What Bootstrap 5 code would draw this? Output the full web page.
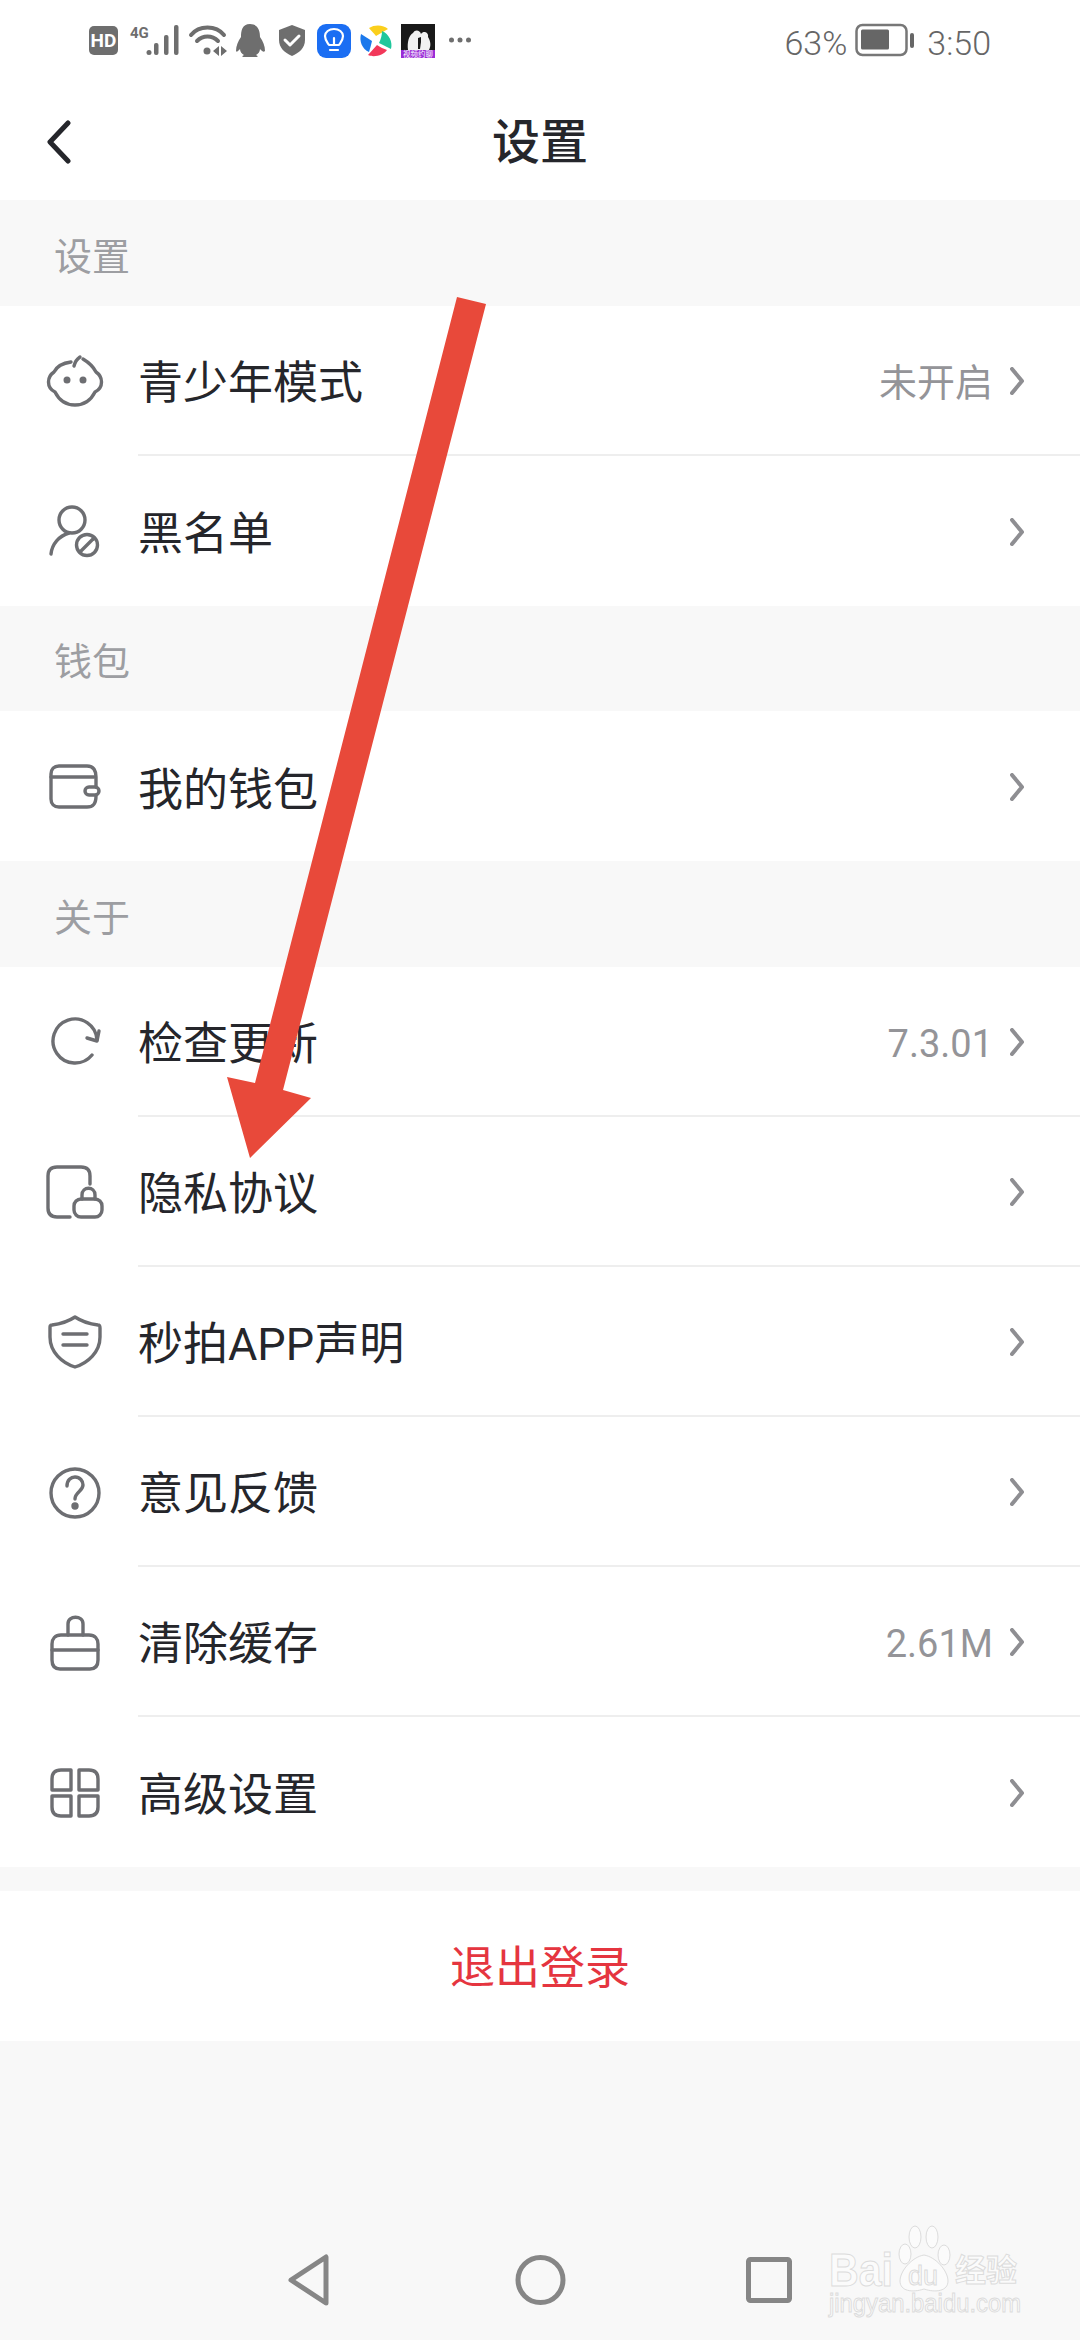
<!doctype html>
<html lang="zh">
<head>
<meta charset="UTF-8" />
<meta name="viewport" content="width=device-width, initial-scale=1" />
<title>设置</title>
<link href="https://cdn.jsdelivr.net/npm/bootstrap@5.3.0/dist/css/bootstrap.min.css" rel="stylesheet" />
<style>
  body { width: 1080px; height: 2340px; overflow: hidden; background: #f8f8f8; font-family: Roboto, "Noto Sans CJK SC", sans-serif; color: #25262b; }
  .page-wrap { height: 2340px; }
  .status-bar { height: 80px; color: #666; font-size: 34px; padding-left: 80px; padding-right: 89px; }
  .status-time { font-weight: 300; padding-top: 6px; }
  .top-bar { height: 120px; font-size: 48px; font-weight: 500; }
  .top-bar span { padding-top: 6px; }
  .top-bar svg { left: 44px; top: 40px; }
  .sect-label { height: 105.5px; padding-left: 54px; padding-top: 9px; font-size: 38px; color: #9d9ea2; }
  .set-list { border-radius: 0; --bs-list-group-bg: #fff; }
  .set-row { height: 150px; padding: 0; border: 0; font-size: 45px; color: #25262b; }
  .row-ico { width: 60px; height: 60px; margin-left: 45px; margin-right: 33px; flex: none; fill: none; stroke: #6d6e72; stroke-width: 3.4; stroke-linecap: round; stroke-linejoin: round; }
  .row-body { height: 100%; padding-right: 56px; border-bottom: 2px solid #eeeeee; }
  .set-row:last-child .row-body { border-bottom: 0; }
  .row-name { padding-top: 9px; }
  .row-val { font-size: 38px; color: #949498; margin-right: 17px; padding-top: 8px; }
  .row-chev { width: 14px; height: 28px; margin-top: 2px; fill: none; stroke: #8e8e92; stroke-width: 4; stroke-linecap: round; stroke-linejoin: round; }
  .logout-row { height: 150px; margin-top: 24px; padding-top: 6px; font-size: 45px; color: #e5353f; }
  .soft-keys { left: 0; top: 2240px; width: 1080px; height: 80px; fill: none; stroke: #868686; stroke-width: 5; stroke-linejoin: round; }
  .red-arrow { left: 0; top: 0; width: 1080px; height: 2340px; pointer-events: none; }
  .baidu-mark { left: 820px; top: 2215px; width: 240px; height: 110px; }
  .baidu-mark text { fill: #fbfbfb; stroke: #dcdcdc; stroke-width: 1; }
</style>
</head>
<body>
<div class="page-wrap position-relative">

  <div class="status-bar bg-white d-flex align-items-center justify-content-between">
    <svg width="400" height="80" viewBox="80 0 400 80">
      <rect x="89" y="26" width="29" height="29" rx="5" fill="#6e6e6e"/>
      <text x="103.500" y="47" text-anchor="middle" font-family="Roboto" font-weight="700" font-size="19" fill="#fff">HD</text>
      <text x="130" y="38" font-family="Roboto" font-weight="700" font-size="15" fill="#6e6e6e">4G</text>
      <circle cx="149" cy="52.500" r="2.500" fill="#6e6e6e"/>
      <rect x="154" y="43" width="4.500" height="12" rx="2" fill="#6e6e6e"/>
      <rect x="164" y="35" width="4.500" height="20" rx="2" fill="#6e6e6e"/>
      <rect x="174" y="25" width="4.500" height="30" rx="2" fill="#6e6e6e"/>
      <g fill="none" stroke="#6e6e6e" stroke-width="4" stroke-linecap="round">
        <path d="M191 35 C199 25 216 25 224 35"/>
        <path d="M197 41 C203 35 212 35 218 41"/>
      </g>
      <circle cx="207" cy="51" r="3.500" fill="#6e6e6e"/>
      <path d="M219 46 V56 L213 51 Z M221 46 V56 L227 51 Z" fill="#6e6e6e"/>
      <path d="M250 24 C258 24 260 31 260 37 C263 41 265 46 265 51 C263 53 261 50 260 49 C260 52 258 54 256 55 C258 56 258 57 257 57 H243 C242 57 242 56 244 55 C242 54 240 52 240 49 C239 50 237 53 236 51 C236 46 238 41 241 37 C241 31 242 24 250 24 Z" fill="#6e6e6e"/>
      <path d="M292 25 L305 30 V40 C305 48 299 53 292 56 C285 53 279 48 279 40 V30 Z" fill="#6e6e6e"/>
      <path d="M285 40 L290 45 L299 36" fill="none" stroke="#fff" stroke-width="3" stroke-linecap="round" stroke-linejoin="round"/>
      <rect x="317" y="24" width="34" height="34" rx="9" fill="#1b6ef3"/>
      <g fill="none" stroke="#fff" stroke-width="2.200" stroke-linecap="round" stroke-linejoin="round">
        <path d="M329 45 C327 42 325 40 325 36 C325 32 329 29 334 29 C339 29 343 32 343 36 C343 40 341 42 339 45 Z"/>
        <path d="M330 50 H338 M334 45 V38"/>
      </g>
      <path d="M369 28 C375 24 384 25 388 29 L376 36 C374 33 371 31 369 28 Z" fill="#fbcf1c"/>
      <path d="M382 31 C389 34 393 42 391 49 L379 43 C381 39 382 35 382 31 Z" fill="#1fc79c"/>
      <path d="M387 50 C384 55 374 58 368 55 L377 45 C380 47 384 49 387 50 Z" fill="#f2385a"/>
      <path d="M369 52 C362 49 359 41 361 34 L372 41 C371 45 370 49 369 52 Z" fill="#1a78ec"/>
      <rect x="401" y="24" width="34" height="34" fill="#191919"/>
      <path d="M408 50 C407 42 409 35 413 33 C415 29 420 30 421 34 C424 30 429 33 428 37 C431 42 431 46 429 50 Z" fill="#f2f2f2"/>
      <path d="M418 38 L421 37 L421 42 L420 49 H418 Z" fill="#191919"/>
      <rect x="401" y="50" width="34" height="8" fill="#9a2bd6"/>
      <text x="418" y="57" text-anchor="middle" font-family="Noto Sans CJK SC" font-size="7.500" fill="#fff">视频约聊</text>
      <circle cx="451.500" cy="40" r="2.500" fill="#6e6e6e"/><circle cx="460" cy="40" r="2.500" fill="#6e6e6e"/><circle cx="468.500" cy="40" r="2.500" fill="#6e6e6e"/>
    </svg>
    <div class="d-flex align-items-center">
      <span class="status-time">63%</span>
      <svg width="64" height="34" viewBox="0 0 64 34" class="ms-2 me-2">
        <rect x="1.500" y="2" width="50" height="30" rx="6" fill="none" stroke="#777" stroke-width="2.500"/>
        <rect x="6" y="6.500" width="28" height="20" rx="1.500" fill="#666"/>
        <rect x="55" y="10" width="4" height="15" rx="2" fill="#666"/>
      </svg>
      <span class="status-time">3:50</span>
    </div>
  </div>

  <div class="top-bar bg-white position-relative d-flex align-items-center justify-content-center">
    <svg class="position-absolute" width="30" height="44" viewBox="0 0 30 44" fill="none" stroke="#25262b" stroke-width="5" stroke-linecap="round" stroke-linejoin="round"><path d="M24 3 L6 22 L24 41"/></svg>
    <span>设置</span>
  </div>

  <div class="sect-label d-flex align-items-center">设置</div>
  <ul class="list-group list-group-flush set-list">
    <li class="list-group-item set-row d-flex align-items-center">
      <svg class="row-ico" viewBox="0 0 60 60"><path d="M26 11 C18 12 12 15 9 21 C6 23 3.500 26 3.500 31 C3.500 36 6 39 10 41 C14 49 21 54 30 54 C39 54 46 49 50 41 C54 39 56.500 36 56.500 31 C56.500 26 54 23 51 21 C48 15 43 11 38 8"/><path d="M29 15 C30 11 32 8 35 6"/><circle cx="22" cy="29" r="1.800" fill="#6d6e72"/><circle cx="38" cy="29" r="1.800" fill="#6d6e72"/></svg>
      <div class="row-body flex-grow-1 d-flex align-items-center">
        <span class="row-name flex-grow-1">青少年模式</span><span class="row-val">未开启</span>
        <svg class="row-chev" viewBox="0 0 14 28"><path d="M2 2 L12 14 L2 26"/></svg>
      </div>
    </li>
    <li class="list-group-item set-row d-flex align-items-center">
      <svg class="row-ico" viewBox="0 0 60 60"><circle cx="27" cy="19" r="13"/><path d="M6 53 C7 43 14 35 24 32"/><circle cx="42" cy="44" r="10.500"/><path d="M36 50 L48 38"/></svg>
      <div class="row-body flex-grow-1 d-flex align-items-center">
        <span class="row-name flex-grow-1">黑名单</span>
        <svg class="row-chev" viewBox="0 0 14 28"><path d="M2 2 L12 14 L2 26"/></svg>
      </div>
    </li>
  </ul>

  <div class="sect-label d-flex align-items-center">钱包</div>
  <ul class="list-group list-group-flush set-list">
    <li class="list-group-item set-row d-flex align-items-center">
      <svg class="row-ico" viewBox="0 0 60 60"><path d="M51 31 V21 C51 15 49 10 42 10 H14 C9 10 6 13 6 18 V43 C6 48 9 51 14 51 H42 C48 51 51 48 51 40"/><path d="M6 21 H49"/><rect x="40" y="31" width="14" height="8" rx="4"/></svg>
      <div class="row-body flex-grow-1 d-flex align-items-center">
        <span class="row-name flex-grow-1">我的钱包</span>
        <svg class="row-chev" viewBox="0 0 14 28"><path d="M2 2 L12 14 L2 26"/></svg>
      </div>
    </li>
  </ul>

  <div class="sect-label d-flex align-items-center">关于</div>
  <ul class="list-group list-group-flush set-list">
    <li class="list-group-item set-row d-flex align-items-center">
      <svg class="row-ico" viewBox="0 0 60 60"><path d="M47 43 A22 22 0 1 1 52 28"/><path d="M54 19 L52 29 L42 26"/></svg>
      <div class="row-body flex-grow-1 d-flex align-items-center">
        <span class="row-name flex-grow-1">检查更新</span><span class="row-val">7.3.01</span>
        <svg class="row-chev" viewBox="0 0 14 28"><path d="M2 2 L12 14 L2 26"/></svg>
      </div>
    </li>
    <li class="list-group-item set-row d-flex align-items-center">
      <svg class="row-ico" viewBox="0 0 60 60"><path d="M45 22 V14 C45 8 42 5 36 5 H12 C6 5 3 8 3 14 V46 C3 52 6 55 12 55 H25"/><rect x="29" y="37" width="28" height="18" rx="7"/><path d="M37 37 V33 C37 24 50 24 50 33 V37"/></svg>
      <div class="row-body flex-grow-1 d-flex align-items-center">
        <span class="row-name flex-grow-1">隐私协议</span>
        <svg class="row-chev" viewBox="0 0 14 28"><path d="M2 2 L12 14 L2 26"/></svg>
      </div>
    </li>
    <li class="list-group-item set-row d-flex align-items-center">
      <svg class="row-ico" viewBox="0 0 60 60"><path d="M30 5 C24 9 15 12 7 13 C5 13 5 14 5 16 V25 C5 40 17 51 30 55 C43 51 55 40 55 25 V16 C55 14 55 13 53 13 C45 12 36 9 30 5 Z"/><path d="M18 22 H42 M18 33 H42"/></svg>
      <div class="row-body flex-grow-1 d-flex align-items-center">
        <span class="row-name flex-grow-1">秒拍APP声明</span>
        <svg class="row-chev" viewBox="0 0 14 28"><path d="M2 2 L12 14 L2 26"/></svg>
      </div>
    </li>
    <li class="list-group-item set-row d-flex align-items-center">
      <svg class="row-ico" viewBox="0 0 60 60"><circle cx="30" cy="31" r="24"/><path d="M22 24 C22 18 26 15 30 15 C35 15 38 19 38 23 C38 29 30 30 30 37"/><circle cx="30" cy="44" r="2" fill="#6d6e72"/></svg>
      <div class="row-body flex-grow-1 d-flex align-items-center">
        <span class="row-name flex-grow-1">意见反馈</span>
        <svg class="row-chev" viewBox="0 0 14 28"><path d="M2 2 L12 14 L2 26"/></svg>
      </div>
    </li>
    <li class="list-group-item set-row d-flex align-items-center">
      <svg class="row-ico" viewBox="0 0 60 60"><path d="M23 23 V12 C23 3 38 3 38 12 V23"/><path d="M16 23 H44 C50 23 53 27 53 32 V48 C53 54 50 57 45 57 H15 C10 57 7 54 7 48 V32 C7 27 10 23 16 23 Z"/><path d="M7 38 H53"/></svg>
      <div class="row-body flex-grow-1 d-flex align-items-center">
        <span class="row-name flex-grow-1">清除缓存</span><span class="row-val">2.61M</span>
        <svg class="row-chev" viewBox="0 0 14 28"><path d="M2 2 L12 14 L2 26"/></svg>
      </div>
    </li>
    <li class="list-group-item set-row d-flex align-items-center">
      <svg class="row-ico" viewBox="0 0 60 60"><path d="M26 8 H16 C10 8 7 11 7 17 V28 H26 Z"/><path d="M34 8 H44 C50 8 53 11 53 17 V28 H34 Z"/><path d="M26 54 H16 C10 54 7 51 7 45 V34 H26 Z"/><path d="M34 54 H44 C50 54 53 51 53 45 V34 H34 Z"/></svg>
      <div class="row-body flex-grow-1 d-flex align-items-center">
        <span class="row-name flex-grow-1">高级设置</span>
        <svg class="row-chev" viewBox="0 0 14 28"><path d="M2 2 L12 14 L2 26"/></svg>
      </div>
    </li>
  </ul>

  <div class="logout-row bg-white d-flex align-items-center justify-content-center">退出登录</div>

  <svg class="soft-keys position-absolute" viewBox="0 0 1080 80">
    <path d="M326 17 V63 L291 40 Z"/>
    <circle cx="540.500" cy="40" r="22.500"/>
    <rect x="748.500" y="19.500" width="41" height="41" rx="2"/>
  </svg>

  <svg class="baidu-mark position-absolute" viewBox="0 0 240 110">
    <g fill="#fbfbfb" stroke="#dcdcdc" stroke-width="1">
      <ellipse cx="85" cy="39" rx="6" ry="10"/>
      <ellipse cx="95" cy="22" rx="6" ry="11"/>
      <ellipse cx="112" cy="22" rx="6" ry="11"/>
      <ellipse cx="124" cy="40" rx="6" ry="10"/>
      <path d="M104 40 C92 42 80 56 80 66 C80 76 92 78 104 74 C116 78 128 76 128 66 C128 56 116 42 104 40 Z"/>
    </g>
    <text x="9" y="71" font-family="Liberation Sans" font-weight="700" font-size="47" textLength="64" lengthAdjust="spacingAndGlyphs">Bai</text>
    <text x="88" y="70" font-family="Liberation Sans" font-size="27">du</text>
    <text x="135" y="66" font-family="Noto Sans CJK SC" font-weight="700" font-size="31">经验</text>
    <text x="9" y="97" font-family="Liberation Sans" font-size="26" textLength="192" lengthAdjust="spacingAndGlyphs">jingyan.baidu.com</text>
  </svg>

  <svg class="red-arrow position-absolute" viewBox="0 0 1080 2340">
    <path d="M457 297 L486 304 L283 1090 L311 1098 L250 1158 L227 1077 L255 1083 Z" fill="#e8493a"/>
  </svg>
</div>
<script src="https://cdn.jsdelivr.net/npm/bootstrap@5.3.0/dist/js/bootstrap.bundle.min.js"></script>
</body>
</html>
